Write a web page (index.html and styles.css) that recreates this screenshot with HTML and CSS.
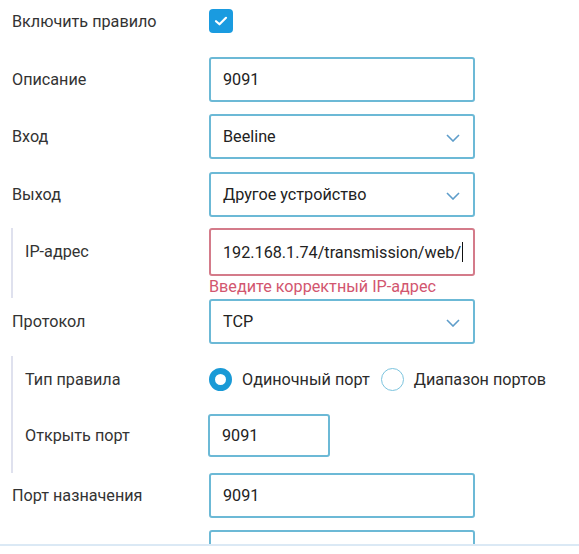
FILE: index.html
```html
<!DOCTYPE html>
<html lang="ru">
<head>
    <meta charset="UTF-8">
    <meta name="viewport" content="width=device-width, initial-scale=1.0">
    <title>Правило</title>
    <link rel="stylesheet" href="styles.css">
</head>
<body>
    <div class="form">
        <div class="row row-check">
            <span class="label">Включить правило</span>
            <span class="checkbox">
                <svg width="16" height="16" viewBox="0 0 16 16"><path d="M3 8.2 L6.5 11.3 L13 4.8" fill="none" stroke="#fff" stroke-width="2.2" stroke-linecap="round" stroke-linejoin="round"/></svg>
            </span>
        </div>

        <div class="row">
            <span class="label">Описание</span>
            <div class="field">9091</div>
        </div>

        <div class="row row-in">
            <span class="label">Вход</span>
            <div class="field select">Beeline
                <svg class="chevron" width="14" height="8" viewBox="0 0 14 8"><path d="M1 1 L7 7 L13 1" fill="none" stroke="#5e9dca" stroke-width="1.6"/></svg>
            </div>
        </div>

        <div class="row row-out">
            <span class="label">Выход</span>
            <div class="field select">Другое устройство
                <svg class="chevron" width="14" height="8" viewBox="0 0 14 8"><path d="M1 1 L7 7 L13 1" fill="none" stroke="#5e9dca" stroke-width="1.6"/></svg>
            </div>
        </div>

        <div class="group group-ip">
            <div class="row row-ip">
                <span class="label">IP-адрес</span>
                <div class="control">
                    <div class="field error">192.168.1.74/transmission/web/<span class="caret"></span></div>
                    <div class="error-text">Введите корректный IP-адрес</div>
                </div>
            </div>
        </div>

        <div class="row row-proto">
            <span class="label">Протокол</span>
            <div class="field select">TCP
                <svg class="chevron" width="14" height="8" viewBox="0 0 14 8"><path d="M1 1 L7 7 L13 1" fill="none" stroke="#5e9dca" stroke-width="1.6"/></svg>
            </div>
        </div>

        <div class="group group-port">
            <div class="row row-radio">
                <span class="label">Тип правила</span>
                <div class="radios">
                    <span class="radio checked"></span>
                    <span class="radio-text">Одиночный порт</span>
                    <span class="radio"></span>
                    <span class="radio-text">Диапазон портов</span>
                </div>
            </div>
            <div class="row row-open">
                <span class="label">Открыть порт</span>
                <div class="field short">9091</div>
            </div>
        </div>

        <div class="row">
            <span class="label">Порт назначения</span>
            <div class="field">9091</div>
        </div>

        <div class="row">
            <span class="label"></span>
            <div class="field"></div>
        </div>
    </div>
</body>
</html>
```

FILE: styles.css
```css
body {
    margin: 0;
    background: #fff;
    font-family: Roboto, "Noto Sans", Arial, sans-serif;
    font-size: 16.2px;
    color: #2b2b2b;
}
.form {
    height: 546px;
    box-sizing: border-box;
    overflow: hidden;
    padding: 9px 0 0 12px;
    border-bottom: 2px solid #dbe9f5;
}
.row {
    display: flex;
    align-items: center;
    margin-bottom: 12px;
}
.label {
    flex: 0 0 197px;
    color: #333;
}
.group .label {
    flex-basis: 184px;
}
.row-check {
    height: 24px;
    margin-bottom: 24px;
}
.row-in {
    margin-bottom: 13px;
}
.row-out {
    margin-bottom: 11px;
}
.checkbox {
    width: 24px;
    height: 24px;
    border-radius: 4px;
    background: #1a9be0;
    display: flex;
    align-items: center;
    justify-content: center;
}
.field {
    width: 266px;
    height: 45px;
    box-sizing: border-box;
    border: 2px solid #6cb9d6;
    border-radius: 3px;
    padding: 0 12px;
    display: flex;
    align-items: center;
    color: #222;
}
.select {
    justify-content: space-between;
    padding-right: 13px;
}
.chevron {
    margin-top: 2px;
}
.group {
    margin-left: -1px;
    border-left: 2px solid #dfe1ee;
    padding-left: 12px;
}
.group-ip {
    margin-bottom: 1px;
}
.group-ip .row {
    margin-bottom: 0;
    align-items: flex-start;
}
.group-ip .label {
    line-height: 47px;
}
.field.error {
    height: 48px;
    border-color: #d47b8a;
    justify-content: flex-start;
    padding-right: 2px;
    white-space: nowrap;
}
.caret {
    flex: 0 0 1px;
    height: 20px;
    background: #111;
    margin-left: 1px;
}
.error-text {
    color: #d2566f;
    line-height: 22px;
}
.row-proto {
    margin-bottom: 12px;
}
.row-radio {
    height: 46px;
}
.row-open {
    margin-bottom: 0;
    padding-bottom: 16px;
}
.group-port {
    margin-bottom: 0;
}
.row-open .field {
    margin-left: -1px;
}
.field.short {
    width: 122px;
    height: 43px;
}
.radios {
    display: flex;
    align-items: center;
}
.radio {
    width: 23px;
    height: 23px;
    box-sizing: border-box;
    border-radius: 50%;
    border: 1.5px solid #7cc4de;
}
.radio.checked {
    border: 6px solid #1a9ad6;
}
.radio-text {
    margin: 0 11px 0 10px;
}
```
